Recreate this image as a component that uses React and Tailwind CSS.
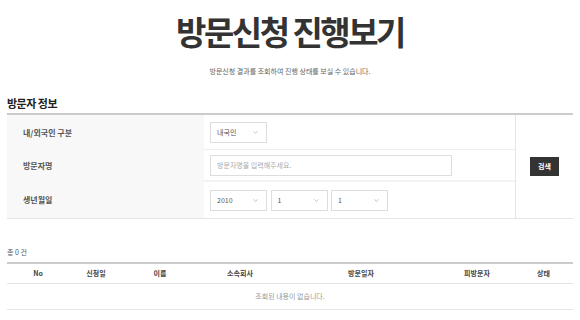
import { ChevronDown } from 'lucide-react';

const font = { fontFamily: '"Noto Sans CJK KR", "Noto Sans", sans-serif' };

const Select = ({ value }) => (
  <div className="flex items-center justify-between w-[57px] h-[21px] border border-[#dddddd] bg-white pl-[6px] pr-[7px]">
    <span className="text-[7px] text-[#555555]">{value}</span>
    <ChevronDown size={7} strokeWidth={2} className="text-[#999999]" />
  </div>
);

const Label = ({ children }) => (
  <div className="flex items-center bg-[#f8f8f8] pl-[16px] text-[8px] font-bold text-[#555555]">
    {children}
  </div>
);

const columns = ['No', '신청일', '이름', '소속회사', '방문일자', '피방문자', '상태'];

export default function App() {
  return (
    <div style={font} className="w-[580px] h-[320px] overflow-hidden bg-white px-[7px] text-[#333333]">
      <div className="flex flex-col items-center pt-[11px]">
        <h1 className="text-[33px] leading-[40px] font-bold text-[#333333] tracking-[-2.5px]">방문신청 진행보기</h1>
        <p className="mt-[15px] text-[7px] leading-[10px] text-[#666666]">
          방문신청 결과를 조회하여 진행 상태를 보실 수 있습니다.
        </p>
      </div>

      <h2 className="mt-[20px] text-[11px] leading-[14px] font-bold text-[#222222] tracking-[-0.5px]">방문자 정보</h2>

      <div className="mt-[3px] flex border-t-2 border-b border-t-[#cccccc] border-b-[#e5e5e5]">
        <div className="grid grid-cols-[197px_311px] grid-rows-[35px_32px_36px] w-[508px]">
          <Label>내/외국인 구분</Label>
          <div className="flex items-center pl-[6px] border-b border-[#eeeeee]">
            <Select value="내국인" />
          </div>
          <Label>방문자명</Label>
          <div className="flex items-center pl-[6px] border-b-2 border-[#f2f2f2]">
            <div className="flex items-center w-[242px] h-[21px] border border-[#dddddd] pl-[6px] text-[7px] text-[#aaaaaa]">
              방문자명을 입력해주세요.
            </div>
          </div>
          <Label>생년월일</Label>
          <div className="flex items-center gap-[3.5px] pl-[6px]">
            <Select value="2010" />
            <Select value="1" />
            <Select value="1" />
          </div>
        </div>
        <div className="flex flex-1 items-center justify-center border-l border-[#e5e5e5]">
          <button className="w-[29px] h-[19px] bg-[#333333] text-white text-[7px] font-bold">검색</button>
        </div>
      </div>

      <div className="mt-[28px] text-[7px] leading-[10px] text-[#555555]">총 0 건</div>

      <div className="mt-[5px] border-t-2 border-[#cccccc]">
        <div className="grid grid-cols-[62px_54px_74px_86px_156px_76px_57px] h-[20px] items-center border-b border-[#e5e5e5]">
          {columns.map((c) => (
            <div key={c} className="text-center text-[7px] font-bold text-[#444444]">{c}</div>
          ))}
        </div>
        <div className="flex h-[26px] items-center justify-center border-b border-[#e5e5e5] text-[7px] text-[#999999]">
          조회된 내용이 없습니다.
        </div>
      </div>
    </div>
  );
}
